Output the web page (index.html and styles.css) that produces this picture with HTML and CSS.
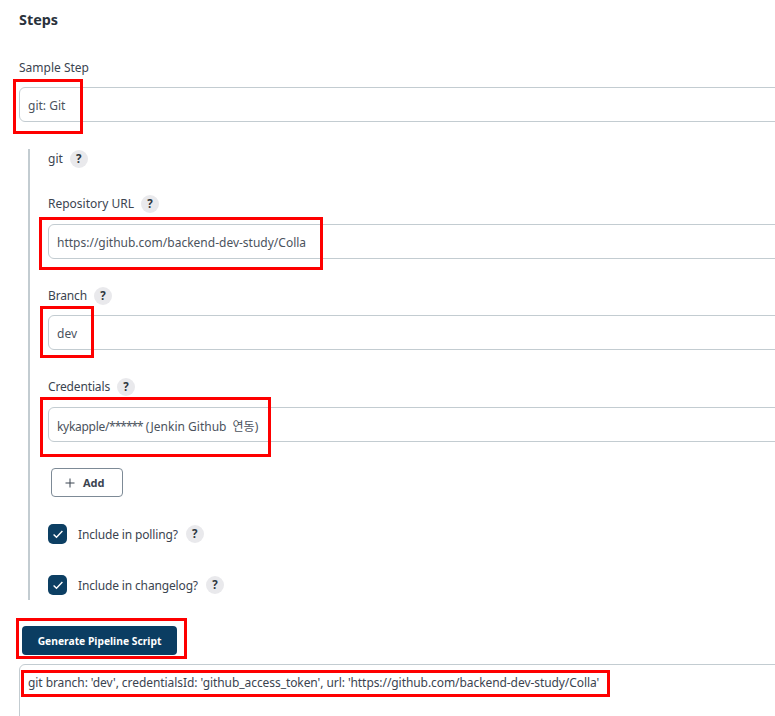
FILE: index.html
```html
<!DOCTYPE html>
<html lang="en">
<head>
<meta charset="utf-8">
<title>Steps</title>
<link rel="stylesheet" href="styles.css">
</head>
<body>
<main class="page">
  <h2 class="title">Steps</h2>
  <label class="label sample-label">Sample Step</label>
  <div class="input sample-input">git: Git</div>
  <section class="nested">
    <div class="label-row git-row"><span class="label">git</span><span class="help">?</span></div>
    <div class="label-row repo-row"><span class="label">Repository URL</span><span class="help">?</span></div>
    <div class="input">https://github.com/backend-dev-study/Colla</div>
    <div class="label-row branch-row"><span class="label tight">Branch</span><span class="help">?</span></div>
    <div class="input">dev</div>
    <div class="label-row cred-row"><span class="label tight">Credentials</span><span class="help">?</span></div>
    <div class="input"><span class="cred"><span class="user">kykapple/</span><span class="stars">******</span> (Jenkin Github <span class="ko">연동</span>)</span></div>
    <button class="add" type="button">
      <svg class="plus" width="12" height="12" viewBox="0 0 12 12"><path d="M6 1.5v9M1.5 6h9"/></svg>
      <span>Add</span>
    </button>
    <div class="check-row polling">
      <span class="check"><svg width="14" height="14" viewBox="0 0 14 14"><path d="M2.6 7.4l2.9 2.9 5.9-6.3"/></svg></span>
      <span class="label tight">Include in polling?</span><span class="help">?</span>
    </div>
    <div class="check-row changelog">
      <span class="check"><svg width="14" height="14" viewBox="0 0 14 14"><path d="M2.6 7.4l2.9 2.9 5.9-6.3"/></svg></span>
      <span class="label tight">Include in changelog?</span><span class="help">?</span>
    </div>
  </section>
  <button class="generate" type="button">Generate Pipeline Script</button>
  <div class="output">git branch: 'dev', credentialsId: 'github_access_token', url: 'https://github.com/backend-dev-study/Colla'</div>
</main>
<div class="mark mark-step"></div>
<div class="mark mark-url"></div>
<div class="mark mark-branch"></div>
<div class="mark mark-cred"></div>
<div class="mark mark-generate"></div>
<div class="mark mark-output"></div>
</body>
</html>
```
FILE: styles.css
```css
html, body {
  margin: 0;
  height: 716px;
  overflow: hidden;
  background: #fff;
}
body {
  position: relative;
  font-family: "Noto Sans", "Noto Sans CJK KR", sans-serif;
  font-size: 12px;
  color: #3b4450;
}
.page {
  width: 900px;
  padding: 10px 0 0 19px;
}
.title {
  margin: 0 0 29px;
  font-size: 14.4px;
  line-height: 20px;
  font-weight: 700;
  color: #2a323c;
}
.label {
  font-size: 12px;
  line-height: 18px;
  color: #3b4450;
}
.tight { letter-spacing: -0.15px; }
.sample-label {
  display: block;
  margin-bottom: 10px;
}
.input {
  box-sizing: border-box;
  height: 35px;
  padding: 2px 8px 0;
  display: flex;
  align-items: center;
  border: 1px solid #c3ccd1;
  border-radius: 6px;
  background: #fff;
  font-size: 12px;
  color: #4b535d;
  white-space: nowrap;
}
.sample-input { width: 860px; }
.cred { white-space: pre; }
.user { letter-spacing: -0.3px; }
.stars { letter-spacing: -1px; }
.ko { margin-left: 3px; }
.nested {
  width: 841px;
  margin: 27px 0 0 9px;
  padding: 1px 0 0 18px;
  border-left: 2px solid #c3ccd1;
  height: 450px;
}
.label-row {
  display: flex;
  align-items: center;
  gap: 7px;
  height: 18px;
}
.git-row { margin-bottom: 27px; }
.repo-row { margin-bottom: 11px; }
.branch-row { margin: 28px 0 10px; }
.cred-row { margin: 28px 0 11px; }
.help {
  width: 18px;
  height: 18px;
  border-radius: 50%;
  background: #e9e9ec;
  color: #2f3740;
  font-size: 11.5px;
  font-weight: 700;
  line-height: 18px;
  text-align: center;
}
.add {
  box-sizing: border-box;
  display: flex;
  align-items: center;
  gap: 7px;
  width: 72px;
  height: 29px;
  margin: 26px 0 0 3px;
  padding: 0 0 0 12px;
  border: 1px solid #7d8a96;
  border-radius: 4px;
  background: #fff;
  font: 700 11px "Noto Sans", sans-serif;
  color: #3b4450;
}
.plus path {
  fill: none;
  stroke: #3b4450;
  stroke-width: 1;
}
.check-row {
  display: flex;
  align-items: center;
  height: 20px;
}
.check-row .label { padding-top: 1px; }
.polling { margin-top: 27px; }
.changelog { margin-top: 31px; }
.check {
  box-sizing: border-box;
  width: 19px;
  height: 20px;
  margin-right: 11px;
  border-radius: 5px;
  background: #0c3f63;
  display: flex;
  align-items: center;
  justify-content: center;
}
.check path {
  fill: none;
  stroke: #fff;
  stroke-width: 1.4;
}
.check-row .help { margin-left: 8px; }
.generate {
  display: block;
  width: 155px;
  height: 29px;
  margin: 26px 0 0 3px;
  padding: 0;
  border: 0;
  border-radius: 4px;
  background: #0b3d62;
  color: #fff;
  font: 700 10.3px "Noto Sans", sans-serif;
}
.output {
  box-sizing: border-box;
  width: 860px;
  height: 80px;
  margin-top: 9px;
  padding: 9px 8px;
  border: 1px solid #c3ccd1;
  border-radius: 6px 6px 0 0;
  font-size: 12px;
  line-height: 18px;
  letter-spacing: -0.07px;
  color: #3b4450;
  white-space: nowrap;
}
.mark {
  position: absolute;
  box-sizing: border-box;
  border: 3px solid #fe0000;
}
.mark-step { left: 13px; top: 79px; width: 70px; height: 55px; }
.mark-url { left: 39px; top: 217px; width: 284px; height: 53px; }
.mark-branch { left: 40px; top: 306px; width: 54px; height: 52px; }
.mark-cred { left: 40px; top: 397px; width: 231px; height: 60px; }
.mark-generate { left: 16px; top: 618px; width: 171px; height: 41px; }
.mark-output { left: 21px; top: 670px; width: 589px; height: 27px; }
```
